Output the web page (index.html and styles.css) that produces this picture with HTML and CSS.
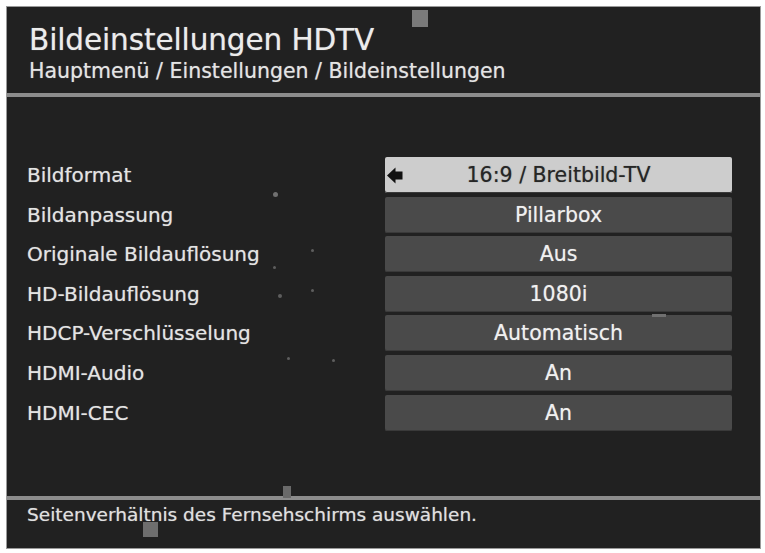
FILE: index.html
```html
<!DOCTYPE html>
<html lang="de">
<head>
<meta charset="utf-8">
<title>Bildeinstellungen HDTV</title>
<link rel="stylesheet" href="styles.css">
</head>
<body>
<div class="screen">
  <header class="head">
    <h1 class="title">Bildeinstellungen HDTV</h1>
    <div class="crumb">Hauptmenü / Einstellungen / Bildeinstellungen</div>
  </header>
  <div class="rule"></div>
  <main class="menu">
    <div class="row">
      <div class="label">Bildformat</div>
      <div class="value selected">
        <svg class="arrow" viewBox="0 0 16 16" width="16" height="17"><path d="M0 8 L8.5 0 V4 H15.5 V12 H8.5 V16 Z" fill="#111"/></svg>
        16:9 / Breitbild-TV
      </div>
    </div>
    <div class="row"><div class="label">Bildanpassung</div><div class="value">Pillarbox</div></div>
    <div class="row"><div class="label">Originale Bildauflösung</div><div class="value">Aus</div></div>
    <div class="row"><div class="label">HD-Bildauflösung</div><div class="value">1080i</div></div>
    <div class="row"><div class="label">HDCP-Verschlüsselung</div><div class="value">Automatisch</div></div>
    <div class="row"><div class="label">HDMI-Audio</div><div class="value">An</div></div>
    <div class="row"><div class="label">HDMI-CEC</div><div class="value">An</div></div>
  </main>
  <div class="rule"></div>
  <footer class="foot">Seitenverhältnis des Fernsehschirms auswählen.</footer>

  <span class="speck sq-top"></span>
  <span class="speck sq-mid"></span>
  <span class="speck sq-bot"></span>
  <span class="dot d1"></span>
  <span class="dot d2"></span>
  <span class="dot d3"></span>
  <span class="dot d4"></span>
  <span class="dot d5"></span>
  <span class="dot d6"></span>
  <span class="dot d7"></span>
  <span class="dash"></span>
</div>
</body>
</html>
```
FILE: styles.css
```css
html, body {
  margin: 0;
  padding: 0;
  background: #ffffff;
}
body {
  padding: 6px 4px 4px 6px;
  font-family: "DejaVu Sans", "Liberation Sans", sans-serif;
}
.screen {
  position: relative;
  width: 753px;
  height: 541px;
  background: #212121;
  border: 1px solid #9a9a9a;
  display: flex;
  flex-direction: column;
  color: #e6e6e6;
  text-shadow: 0 0 1px rgba(230, 230, 230, 0.55);
}
.head {
  padding: 16px 0 0 22px;
  height: 70px;
  box-sizing: border-box;
}
.title {
  margin: 0;
  font-weight: normal;
  font-size: 29.5px;
  line-height: 34px;
  letter-spacing: -0.1px;
  color: #ececec;
}
.crumb {
  font-size: 20.5px;
  line-height: 24px;
  margin-top: 2px;
  color: #e4e4e4;
}
.rule {
  height: 4px;
  background: #8c8c8c;
  margin-top: 16px;
}
.menu {
  flex: 1;
  padding: 60px 28px 0 20px;
}
.row {
  display: flex;
  align-items: center;
  height: 36px;
  margin-bottom: 3.6px;
}
.label {
  width: 358px;
  font-size: 20px;
  color: #e4e4e4;
}
.value {
  position: relative;
  width: 347px;
  height: 36px;
  background: #4a4a4a;
  border-radius: 2px;
  display: flex;
  align-items: center;
  justify-content: center;
  font-size: 20.5px;
  color: #f0f0f0;
  box-shadow: inset 0 -1px 0 #3a3a3a;
}
.value.selected {
  background: #cdcdcd;
  color: #262626;
  text-shadow: 0 0 1px rgba(30, 30, 30, 0.5);
}
.arrow {
  position: absolute;
  left: 2px;
  top: 10px;
}
.menu + .rule {
  margin-top: 0;
}
.foot {
  height: 48px;
  padding: 4px 0 0 20px;
  box-sizing: border-box;
  font-size: 18.5px;
  color: #e0e0e0;
}
.speck {
  position: absolute;
  background: #7a7a7a;
  text-shadow: none;
}
.sq-top { left: 405px; top: 3px; width: 16px; height: 17px; }
.sq-mid { left: 276px; top: 479px; width: 8px; height: 12px; background: #6a6a6a; }
.sq-bot { left: 136px; top: 515px; width: 15px; height: 15px; background: #6e6e6e; }
.dot {
  position: absolute;
  width: 3px;
  height: 3px;
  border-radius: 50%;
  background: #5e5e5e;
}
.d1 { left: 266px; top: 185px; width: 5px; height: 5px; background: #707070; }
.d2 { left: 304px; top: 242px; }
.d3 { left: 266px; top: 259px; }
.d4 { left: 304px; top: 282px; }
.d5 { left: 271px; top: 287px; width: 4px; height: 4px; }
.d6 { left: 280px; top: 350px; }
.d7 { left: 325px; top: 352px; }
.dash { position: absolute; left: 645px; top: 307px; width: 14px; height: 3px; background: #707070; }
```
